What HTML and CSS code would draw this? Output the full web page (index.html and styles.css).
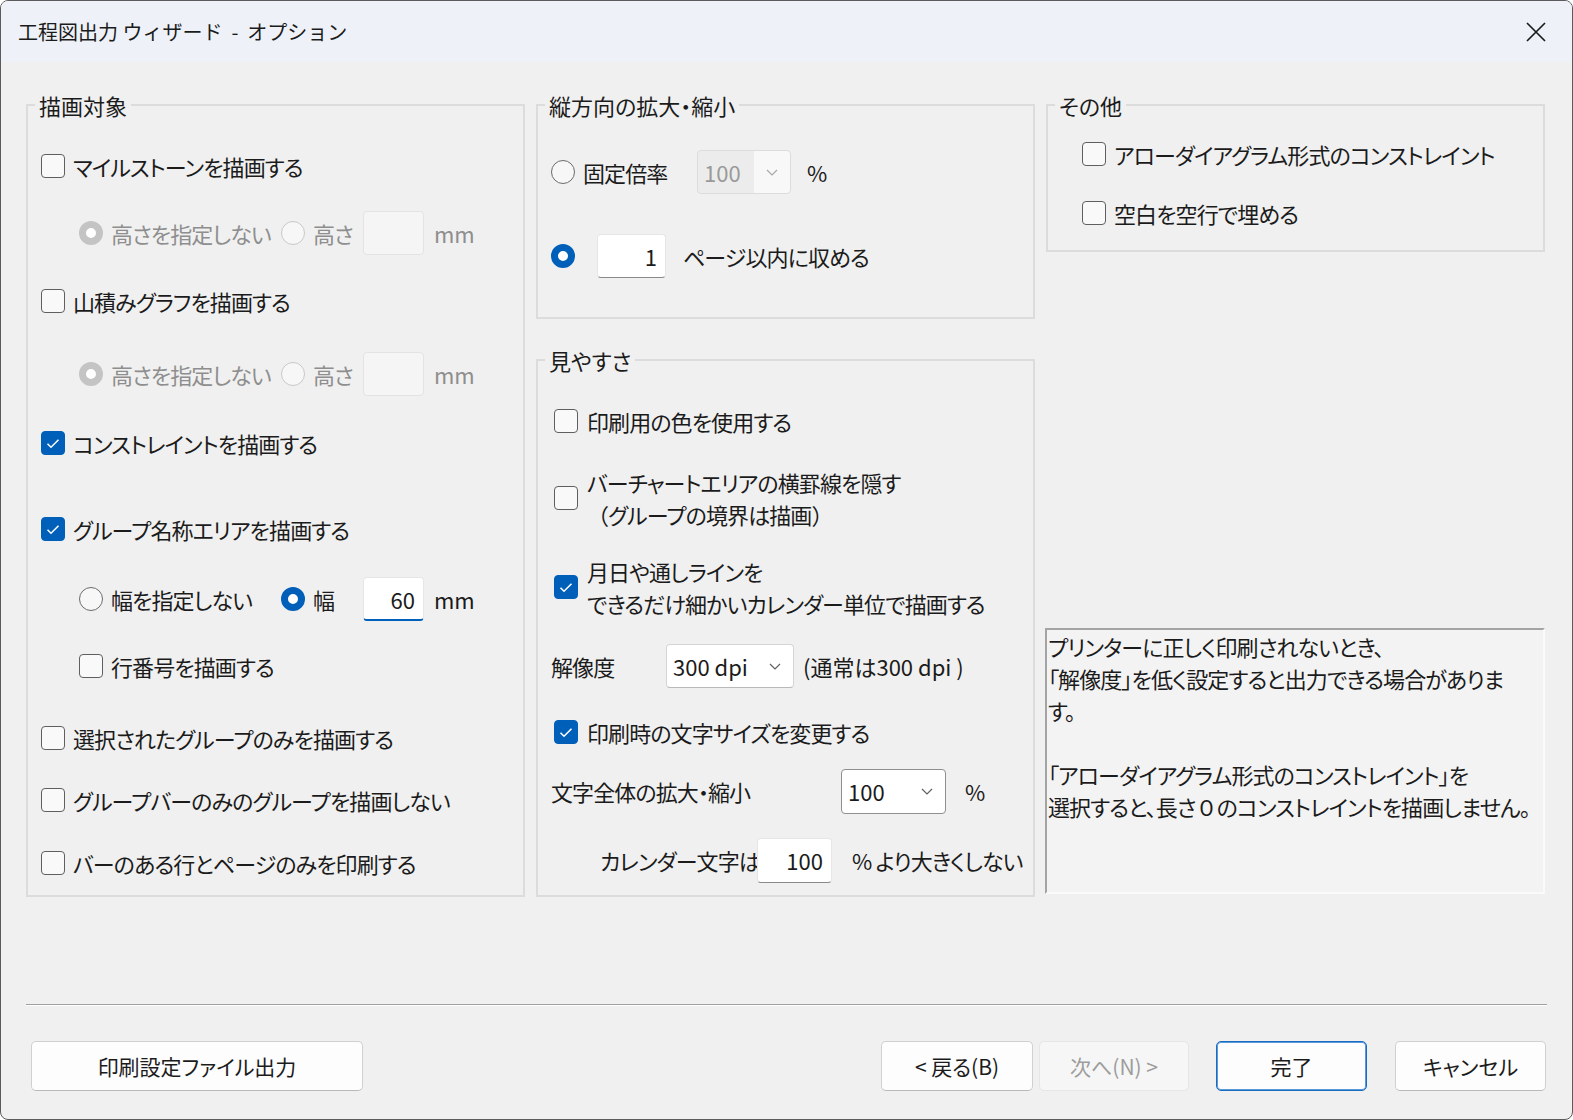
FILE: index.html
```html
<!DOCTYPE html>
<html lang="ja">
<head>
<meta charset="UTF-8">
<meta name="viewport" content="width=device-width, initial-scale=1.0">
<title>工程図出力 ウィザード - オプション</title>
<link rel="stylesheet" href="styles.css">
</head>
<body>
<div class="window">
    <div class="titlebar">
        <span class="title">工程図出力 ウィザード&nbsp; -&nbsp; オプション</span>
        <span class="close">
            <svg width="22" height="22" viewBox="0 0 22 22"><path d="M2 2L20 20M20 2L2 20" stroke="#1b1b1b" stroke-width="1.7"/></svg>
        </span>
    </div>

    <div class="columns">
        <!-- left column -->
        <div class="col">
            <fieldset class="group g-draw">
                <legend>描画対象</legend>
                <div class="rows rows-draw">
                    <div class="row"><span class="cb"></span>マイルストーンを描画する</div>
                    <div class="row sub disabled">
                        <span class="opt opt-a"><span class="rd on"></span>高さを指定しない</span>
                        <span class="opt opt-b"><span class="rd"></span>高さ</span>
                        <span class="field"></span>
                        <span class="unit">mm</span>
                    </div>
                    <div class="row"><span class="cb"></span>山積みグラフを描画する</div>
                    <div class="row sub disabled">
                        <span class="opt opt-a"><span class="rd on"></span>高さを指定しない</span>
                        <span class="opt opt-b"><span class="rd"></span>高さ</span>
                        <span class="field"></span>
                        <span class="unit">mm</span>
                    </div>
                    <div class="row"><span class="cb on"><svg width="14" height="11" viewBox="0 0 14 11"><path d="M1.5 5.8L5 9.2L12.5 1.8" fill="none" stroke="#fff" stroke-width="1.6"/></svg></span>コンストレイントを描画する</div>
                    <div class="row"><span class="cb on"><svg width="14" height="11" viewBox="0 0 14 11"><path d="M1.5 5.8L5 9.2L12.5 1.8" fill="none" stroke="#fff" stroke-width="1.6"/></svg></span>グループ名称エリアを描画する</div>
                    <div class="row sub">
                        <span class="opt opt-a"><span class="rd"></span>幅を指定しない</span>
                        <span class="opt opt-b"><span class="rd on"></span>幅</span>
                        <span class="field focus">60</span>
                        <span class="unit">mm</span>
                    </div>
                    <div class="row sub"><span class="cb"></span>行番号を描画する</div>
                    <div class="row"><span class="cb"></span>選択されたグループのみを描画する</div>
                    <div class="row"><span class="cb"></span>グループバーのみのグループを描画しない</div>
                    <div class="row"><span class="cb"></span>バーのある行とページのみを印刷する</div>
                </div>
            </fieldset>
        </div>

        <!-- middle column -->
        <div class="col col-mid">
            <fieldset class="group g-scale">
                <legend>縦方向の拡大・縮小</legend>
                <div class="rows rows-scale">
                    <div class="row">
                        <span class="rd"></span>
                        <span class="lbl-fixed">固定倍率</span>
                        <span class="combo combo-off"><span class="combo-text">100</span><svg width="12" height="7" viewBox="0 0 12 7"><path d="M1 1l5 5 5-5" fill="none" stroke="#a8a8a8" stroke-width="1.2"/></svg></span>
                        <span class="pct">%</span>
                    </div>
                    <div class="row">
                        <span class="rd on"></span>
                        <span class="field field-page">1</span>
                        <span class="page-text">ページ以内に収める</span>
                    </div>
                </div>
            </fieldset>

            <fieldset class="group g-view">
                <legend>見やすさ</legend>
                <div class="rows rows-view">
                    <div class="row ind"><span class="cb"></span>印刷用の色を使用する</div>
                    <div class="row ind two">
                        <span class="cb"></span>
                        <span>バーチャートエリアの横罫線を隠す<br><span class="full">（</span>グループの境界は描画<span class="full">）</span></span>
                    </div>
                    <div class="row ind two">
                        <span class="cb on"><svg width="14" height="11" viewBox="0 0 14 11"><path d="M1.5 5.8L5 9.2L12.5 1.8" fill="none" stroke="#fff" stroke-width="1.6"/></svg></span>
                        <span>月日や通しラインを<br>できるだけ細かいカレンダー単位で描画する</span>
                    </div>
                    <div class="row">
                        <span class="lbl-dpi">解像度</span>
                        <span class="combo combo-dpi"><span class="combo-text">300 dpi</span><svg width="12" height="7" viewBox="0 0 12 7"><path d="M1 1l5 5 5-5" fill="none" stroke="#5f5f5f" stroke-width="1.2"/></svg></span>
                        <span class="dpi-note">(通常は300 dpi )</span>
                    </div>
                    <div class="row ind"><span class="cb on"><svg width="14" height="11" viewBox="0 0 14 11"><path d="M1.5 5.8L5 9.2L12.5 1.8" fill="none" stroke="#fff" stroke-width="1.6"/></svg></span>印刷時の文字サイズを変更する</div>
                    <div class="row">
                        <span class="lbl-all">文字全体の拡大・縮小</span>
                        <span class="combo combo-all"><span class="combo-text">100</span><svg width="12" height="7" viewBox="0 0 12 7"><path d="M1 1l5 5 5-5" fill="none" stroke="#5f5f5f" stroke-width="1.2"/></svg></span>
                        <span class="pct pct-all">%</span>
                    </div>
                    <div class="row cal">
                        <span class="lbl-cal">カレンダー文字は</span>
                        <span class="field field-cal">100</span>
                        <span class="cal-note">% より大きくしない</span>
                    </div>
                </div>
            </fieldset>
        </div>

        <!-- right column -->
        <div class="col">
            <fieldset class="group g-other">
                <legend>その他</legend>
                <div class="rows rows-other">
                    <div class="row"><span class="cb"></span>アローダイアグラム形式のコンストレイント</div>
                    <div class="row"><span class="cb"></span>空白を空行で埋める</div>
                </div>
            </fieldset>
            <div class="info">プリンターに正しく印刷されないとき、<br>「解像度」を低く設定すると出力できる場合がありま<br>す。<br><br>「アローダイアグラム形式のコンストレイント」を<br>選択すると、長さ<span class="full">０</span>のコンストレイントを描画しません。</div>
        </div>
    </div>

    <div class="sep"></div>

    <div class="buttons">
        <button class="btn btn-export">印刷設定ファイル出力</button>
        <div class="btn-group">
            <button class="btn">&lt; 戻る(B)</button>
            <button class="btn btn-off">次へ(N) &gt;</button>
            <button class="btn btn-default">完了</button>
            <button class="btn">キャンセル</button>
        </div>
    </div>
</div>
</body>
</html>
```

FILE: styles.css
```css
html,
body{
    width: 1573px;
    height: 1120px;
    overflow: hidden;
}
body{
    margin: 0;
    background: #fff;
    font-family: "Noto Sans CJK JP", "Noto Sans", sans-serif;
    font-feature-settings: "palt";
    color: #1b1b1b;
}
.window{
    width: 1573px;
    height: 1120px;
    box-sizing: border-box;
    border: 1px solid #5b5b5b;
    border-radius: 8px;
    background: #f0f0f0;
    overflow: hidden;
}
.titlebar{
    height: 61px;
    background: #eef2f8;
    display: flex;
    align-items: center;
    justify-content: space-between;
    padding: 0 25px 0 17px;
}
.title{
    font-size: 20px;
    font-feature-settings: normal;
}
.close{
    display: flex;
}
.full{
    font-feature-settings: normal;
}

/* columns */
.columns{
    display: grid;
    grid-template-columns: 499px 499px 499px;
    column-gap: 11px;
    padding: 32px 0 0 25px;
    align-items: start;
}
.col{
    display: flex;
    flex-direction: column;
}
.col-mid{
    gap: 30px;
}

/* group boxes */
.group{
    margin: 0;
    padding: 28px 13px 0 13px;
    border: 2px solid #dcdcdc;
    box-sizing: border-box;
    width: 499px;
    min-width: 0;
}
.group legend{
    margin-left: -6px;
    padding: 0 4px;
    font-size: 22px;
    line-height: 22px;
}
.g-draw{ height: 803px; }
.g-scale{ height: 225px; padding-top: 34px; }
.g-view{ height: 548px; }
.g-other{ height: 158px; padding-top: 16px; }

.rows{
    display: grid;
    align-items: start;
}
.rows-draw{ grid-template-rows: 67px 68px 73px 69px 86px 70px 67px 72px 62px 63px 44px; }
.rows-scale{ grid-template-rows: 84px 44px; }
.rows-view{ grid-template-rows: 67px 89px 89px 66px 59px 69px 44px; }
.rows-other{ grid-template-rows: 59px 44px; padding-left: 21px; }

.row{
    height: 44px;
    display: flex;
    align-items: center;
    font-size: 22px;
    line-height: 32px;
    letter-spacing: -0.9px;
    white-space: nowrap;
}
.row.two{
    height: 64px;
}
.row.ind{
    padding-left: 3px;
}
.row.sub{
    padding-left: 38px;
}
.disabled{
    color: #8e8e8e;
}

/* checkbox / radio */
.cb{
    width: 24px;
    height: 24px;
    box-sizing: border-box;
    border: 1.5px solid #5f5f5f;
    border-radius: 4px;
    background: #f9f9f9;
    margin-right: 8px;
    flex: none;
    display: flex;
    align-items: center;
    justify-content: center;
}
.cb.on{
    background: #005fb8;
    border-color: #005fb8;
}
.ind .cb{
    margin-right: 9px;
}
.rd{
    width: 24px;
    height: 24px;
    box-sizing: border-box;
    border: 1.5px solid #6b6b6b;
    border-radius: 50%;
    background: #f7f7f7;
    margin-right: 8px;
    flex: none;
}
.rd.on{
    border: 7px solid #005fb8;
    background: #fff;
}
.disabled .rd{
    border-color: #c8c8c8;
}
.disabled .rd.on{
    border: 7px solid #c4c4c4;
}

/* sub options */
.opt{
    display: flex;
    align-items: center;
}
.opt-a{ width: 202px; }
.opt-b{ width: 82px; }
.unit{
    margin-left: 10px;
    letter-spacing: 0;
}

/* edit fields */
.field{
    width: 61px;
    height: 44px;
    box-sizing: border-box;
    background: #fff;
    border: 1px solid #e6e6e6;
    border-bottom-color: #8a8a8a;
    border-radius: 4px;
    text-align: right;
    padding-right: 8px;
    line-height: 42px;
    letter-spacing: 0;
}
.field.focus{
    border-bottom: 2px solid #005fb8;
}
.disabled .field{
    background: #f5f5f5;
    border-color: #e3e3e3;
}
.field-page{
    width: 69px;
    margin-left: 14px;
}
.page-text{
    margin-left: 17px;
}
.field-cal{
    width: 75px;
    height: 45px;
}

/* combos */
.combo{
    display: flex;
    align-items: center;
    justify-content: space-between;
    height: 44px;
    box-sizing: border-box;
    background: #fff;
    border: 1px solid #d5d5d5;
    border-bottom-color: #b9b9b9;
    border-radius: 4px;
    padding: 0 12px 0 6px;
    letter-spacing: 0;
}
.combo-off{
    width: 94px;
    color: #9a9a9a;
    background: linear-gradient(to right, #ececec 0, #ececec 56px, #f8f8f8 56px);
    border-color: #dcdcdc;
}
.combo-dpi{
    width: 128px;
}
.combo-all{
    width: 105px;
    height: 45px;
    border-color: #8f8f8f;
}
.lbl-fixed{
    width: 114px;
}
.pct{
    margin-left: 16px;
}
.pct-all{
    margin-left: 19px;
}
.lbl-dpi{
    width: 115px;
}
.dpi-note{
    margin-left: 9px;
    letter-spacing: 0;
}
.lbl-all{
    width: 290px;
}
.row.cal{
    padding-left: 49px;
}
.lbl-cal{
    width: 157px;
}
.cal-note{
    margin-left: 20px;
}

/* info text */
.info{
    margin-top: 376px;
    margin-left: -1px;
    height: 266px;
    box-sizing: border-box;
    border: 2px solid;
    border-color: #a4a4a4 #fafafa #fafafa #a4a4a4;
    background: #f3f3f3;
    padding: 0 0 0 1px;
    font-size: 22px;
    line-height: 32px;
    letter-spacing: -0.9px;
    white-space: nowrap;
    overflow: hidden;
}

/* footer */
.sep{
    margin: 107px 25px 0 25px;
    border-top: 1px solid #a0a0a0;
    border-bottom: 1px solid #fff;
}
.buttons{
    display: flex;
    justify-content: space-between;
    padding: 35px 26px 0 30px;
}
.btn-group{
    display: flex;
}
.btn{
    width: 151px;
    height: 50px;
    box-sizing: border-box;
    border: 1px solid #d0d0d0;
    border-bottom-color: #b9b9b9;
    border-radius: 5px;
    background: #fdfdfd;
    font-family: inherit;
    font-feature-settings: "palt";
    font-size: 21px;
    color: #1b1b1b;
    padding: 0;
    margin-left: 28px;
}
.btn-group .btn:first-child{
    margin-left: 0;
    width: 152px;
}
.btn-off{
    width: 150px;
    margin-left: 6px;
    color: #9d9d9d;
    background: #f6f6f6;
    border-color: #e6e6e6;
}
.btn-default{
    margin-left: 27px;
    border: 1px solid #1a6cc0;
    box-shadow: inset 0 0 0 1px #5a98d8;
}
.btn-export{
    width: 332px;
    margin-left: 0;
}
```
